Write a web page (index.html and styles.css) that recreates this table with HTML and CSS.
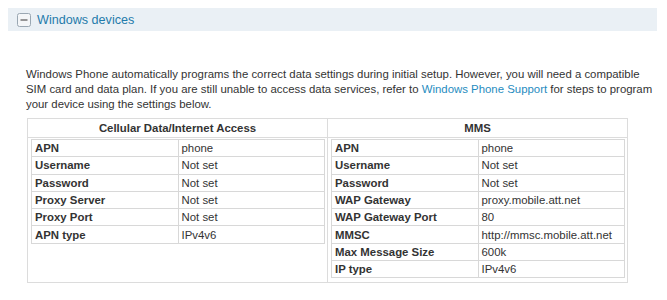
FILE: index.html
```html
<!DOCTYPE html>
<html>
<head>
<meta charset="utf-8">
<link rel="stylesheet" href="styles.css">
</head>
<body>
<div class="section-head">
  <span class="toggle"><svg width="14" height="14" viewBox="0 0 14 14"><rect x="0.5" y="0.5" width="13" height="13" rx="2" ry="2" fill="#f4f6f8" stroke="#9aa7b2"/><line x1="3.5" y1="7" x2="10.5" y2="7" stroke="#555" stroke-width="1.2"/></svg></span>
  <span class="title">Windows devices</span>
</div>
<p class="intro">Windows Phone automatically programs the correct data settings during initial setup. However, you will need a compatible SIM card and data plan. If you are still unable to access data services, refer to <a href="#">Windows Phone Support</a> for steps to program your device using the settings below.</p>
<table class="outer">
  <tr>
    <th>Cellular Data/Internet Access</th>
    <th>MMS</th>
  </tr>
  <tr>
    <td>
      <table class="inner">
        <tr><td class="k">APN</td><td>phone</td></tr>
        <tr><td class="k">Username</td><td>Not set</td></tr>
        <tr><td class="k">Password</td><td>Not set</td></tr>
        <tr><td class="k">Proxy Server</td><td>Not set</td></tr>
        <tr><td class="k">Proxy Port</td><td>Not set</td></tr>
        <tr><td class="k">APN type</td><td>IPv4v6</td></tr>
      </table>
    </td>
    <td>
      <table class="inner">
        <tr><td class="k">APN</td><td>phone</td></tr>
        <tr><td class="k">Username</td><td>Not set</td></tr>
        <tr><td class="k">Password</td><td>Not set</td></tr>
        <tr><td class="k">WAP Gateway</td><td>proxy.mobile.att.net</td></tr>
        <tr><td class="k">WAP Gateway Port</td><td>80</td></tr>
        <tr><td class="k">MMSC</td><td>http://mmsc.mobile.att.net</td></tr>
        <tr><td class="k">Max Message Size</td><td>600k</td></tr>
        <tr><td class="k">IP type</td><td>IPv4v6</td></tr>
      </table>
    </td>
  </tr>
</table>
</body>
</html>
```
FILE: styles.css
```css
body {
  margin: 8px;
  font-family: "Liberation Sans", Arial, sans-serif;
  font-size: 11.4px;
  color: #333;
  background: #fff;
}
.section-head {
  display: flex;
  align-items: center;
  gap: 6px;
  height: 23px;
  padding-left: 9px;
  background: #eaf0f5;
  width: 640px;
}
.toggle {
  display: flex;
}
.title {
  font-size: 12.6px;
  color: #1f7bab;
}
.intro {
  margin: 36px 0 0 18px;
  width: 630px;
  line-height: 15px;
  color: #333;
}
.intro a {
  color: #1f8cc0;
  text-decoration: none;
}
.outer {
  margin: 6px 0 0 19px;
  width: 601px;
  border-collapse: collapse;
  border: 1px solid #dcdcdc;
}
.outer th {
  border: 1px solid #dcdcdc;
  font-weight: bold;
  height: 18px;
  padding: 0;
  text-align: center;
  width: 50%;
}
.outer td {
  border: 1px solid #dcdcdc;
  vertical-align: top;
  padding: 1px 2px 4px 3px;
}
.inner {
  width: 100%;
  border-collapse: collapse;
  border: 1px solid #d0d0d0;
}
.inner td {
  border: 1px solid #d8d8d8;
  padding: 0 0 0 3px;
  height: 16.3px;
  width: 50%;
  vertical-align: middle;
}
.inner td.k {
  font-weight: bold;
}
```
